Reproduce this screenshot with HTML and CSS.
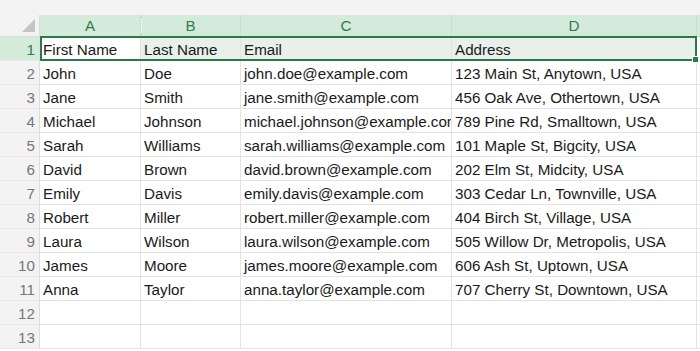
FILE: index.html
```html
<!DOCTYPE html>
<html lang="en">

<head>
    <meta charset="UTF-8">
    <meta name="viewport" content="width=device-width, initial-scale=1.0">
    <title>Sheet</title>
    <link rel="stylesheet" href="styles.css">
</head>

<body>
    <div class="topbar"></div>

    <div class="sheet">
        <!-- cabeçalho das colunas -->
        <div class="cell corner"><span class="tri"></span></div>
        <div class="cell colhead">A</div>
        <div class="cell colhead colb"><span class="resize"></span>B</div>
        <div class="cell colhead">C</div>
        <div class="cell colhead">D</div>
        <div class="cell colhead rest"></div>

        <div class="cell rowhead active">1</div>
        <div class="cell sel first">First Name</div>
        <div class="cell sel">Last Name</div>
        <div class="cell sel">Email</div>
        <div class="cell sel">Address</div>
        <div class="cell rest"></div>

        <div class="cell rowhead">2</div>
        <div class="cell">John</div>
        <div class="cell">Doe</div>
        <div class="cell">john.doe@example.com</div>
        <div class="cell">123 Main St, Anytown, USA</div>
        <div class="cell rest"></div>

        <div class="cell rowhead">3</div>
        <div class="cell">Jane</div>
        <div class="cell">Smith</div>
        <div class="cell">jane.smith@example.com</div>
        <div class="cell">456 Oak Ave, Othertown, USA</div>
        <div class="cell rest"></div>

        <div class="cell rowhead">4</div>
        <div class="cell">Michael</div>
        <div class="cell">Johnson</div>
        <div class="cell clip">michael.johnson@example.com</div>
        <div class="cell">789 Pine Rd, Smalltown, USA</div>
        <div class="cell rest"></div>

        <div class="cell rowhead">5</div>
        <div class="cell">Sarah</div>
        <div class="cell">Williams</div>
        <div class="cell">sarah.williams@example.com</div>
        <div class="cell">101 Maple St, Bigcity, USA</div>
        <div class="cell rest"></div>

        <div class="cell rowhead">6</div>
        <div class="cell">David</div>
        <div class="cell">Brown</div>
        <div class="cell">david.brown@example.com</div>
        <div class="cell">202 Elm St, Midcity, USA</div>
        <div class="cell rest"></div>

        <div class="cell rowhead">7</div>
        <div class="cell">Emily</div>
        <div class="cell">Davis</div>
        <div class="cell">emily.davis@example.com</div>
        <div class="cell">303 Cedar Ln, Townville, USA</div>
        <div class="cell rest"></div>

        <div class="cell rowhead">8</div>
        <div class="cell">Robert</div>
        <div class="cell">Miller</div>
        <div class="cell">robert.miller@example.com</div>
        <div class="cell">404 Birch St, Village, USA</div>
        <div class="cell rest"></div>

        <div class="cell rowhead">9</div>
        <div class="cell">Laura</div>
        <div class="cell">Wilson</div>
        <div class="cell">laura.wilson@example.com</div>
        <div class="cell">505 Willow Dr, Metropolis, USA</div>
        <div class="cell rest"></div>

        <div class="cell rowhead">10</div>
        <div class="cell">James</div>
        <div class="cell">Moore</div>
        <div class="cell">james.moore@example.com</div>
        <div class="cell">606 Ash St, Uptown, USA</div>
        <div class="cell rest"></div>

        <div class="cell rowhead">11</div>
        <div class="cell">Anna</div>
        <div class="cell">Taylor</div>
        <div class="cell">anna.taylor@example.com</div>
        <div class="cell">707 Cherry St, Downtown, USA</div>
        <div class="cell rest"></div>

        <div class="cell rowhead">12</div>
        <div class="cell"></div>
        <div class="cell"></div>
        <div class="cell"></div>
        <div class="cell"></div>
        <div class="cell rest"></div>

        <div class="cell rowhead">13</div>
        <div class="cell"></div>
        <div class="cell"></div>
        <div class="cell"></div>
        <div class="cell"></div>
        <div class="cell rest"></div>

        <!-- seleção da linha 1 -->
        <div class="selection"><span class="handle"></span></div>
    </div>
</body>

</html>
```

FILE: styles.css
```css
body {
    font-family: "Liberation Sans", Arial, sans-serif;
    margin: 0;
    padding: 0;
    background: #fff;
    color: #1a1a1a;
    overflow: hidden;
}

.topbar {
    height: 15px;
    background: #f3f3f3;
}

.sheet {
    position: relative;
    display: grid;
    grid-template-columns: 40px 101px 100px 211px 245px 1fr;
    grid-template-rows: 22px repeat(13, 24px);
}

.cell {
    box-sizing: border-box;
    border-right: 1px solid #e3e3e3;
    border-bottom: 1px solid #e3e3e3;
    font-size: 15.2px;
    line-height: 23px;
    padding: 1px 3px 0;
    white-space: nowrap;
    overflow: hidden;
}

.cell.rest {
    border-right: none;
}

.corner {
    position: relative;
    background: #f3f3f3;
    border-right: 1px solid #dcdcdc;
    border-bottom: 1px solid #dcdcdc;
}

.tri {
    position: absolute;
    right: 4px;
    bottom: 4px;
    width: 0;
    height: 0;
    border-left: 13px solid transparent;
    border-bottom: 13px solid #c4c4c4;
}

.colhead {
    position: relative;
    background: #d4ebdc;
    color: #2f7d47;
    text-align: center;
    line-height: 21px;
    padding-top: 0;
    border-right: 1px solid #c6e0ce;
    border-bottom: 1px solid #b9d6c2;
}

.colhead.rest {
    border-right: none;
}

.resize {
    position: absolute;
    left: -3px;
    top: 2px;
    width: 3px;
    height: 16px;
    border: 1px solid #7fbf93;
    border-right: none;
    border-radius: 3px 0 0 3px;
    background: #e8f4ec;
}

.rowhead {
    background: #f3f3f3;
    color: #777;
    text-align: right;
    padding-right: 4px;
    border-right: 1px solid #dcdcdc;
    border-bottom: 1px solid #e8e8e8;
}

.rowhead.active {
    background: #d4ebdc;
    color: #2f7d47;
}

.sel {
    background: #e9f0eb;
}

.sel.first {
    background: #fff;
}

.selection {
    position: absolute;
    left: 40px;
    top: 21px;
    width: 657px;
    height: 25px;
    box-sizing: border-box;
    border: 2px solid #2a7a45;
    pointer-events: none;
}

.handle {
    position: absolute;
    right: -4px;
    bottom: -4px;
    width: 5px;
    height: 5px;
    background: #2a7a45;
    border: 1px solid #fff;
}
```
